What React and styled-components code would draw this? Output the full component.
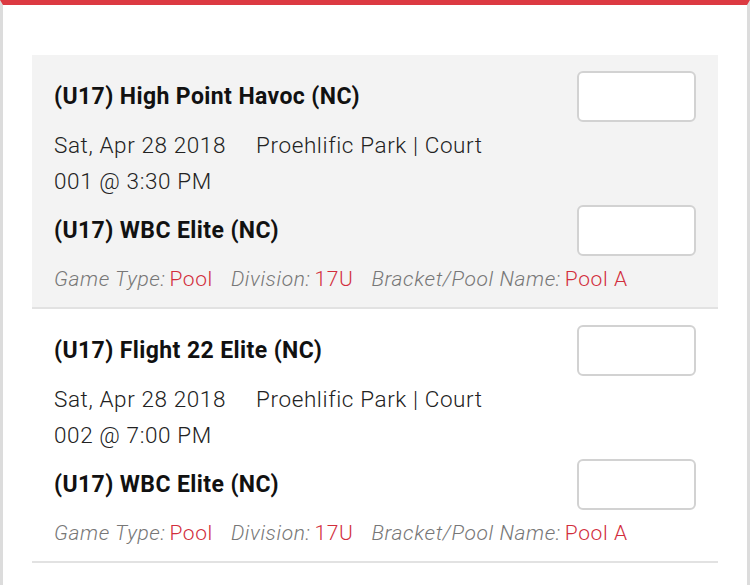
import React from "react";
import styled, { createGlobalStyle } from "styled-components";

const games = [
  {
    id: 1,
    home: "(U17) High Point Havoc (NC)",
    away: "(U17) WBC Elite (NC)",
    date: "Sat, Apr 28 2018",
    place: "Proehlific Park | Court 001 @ 3:30 PM",
    type: "Pool",
    division: "17U",
    pool: "Pool A",
    shaded: true,
  },
  {
    id: 2,
    home: "(U17) Flight 22 Elite (NC)",
    away: "(U17) WBC Elite (NC)",
    date: "Sat, Apr 28 2018",
    place: "Proehlific Park | Court 002 @ 7:00 PM",
    type: "Pool",
    division: "17U",
    pool: "Pool A",
    shaded: false,
  },
];

const App = () => {
  return (
    <>
      <GlobalStyle />
      <Panel>
        {games.map((game) => (
          <Game key={game.id} $shaded={game.shaded}>
            <TeamRow>
              <TeamName>{game.home}</TeamName>
              <ScoreInput type="text" />
            </TeamRow>
            <When>
              <DateText>{game.date}</DateText>
              {game.place}
            </When>
            <TeamRow $gap>
              <TeamName>{game.away}</TeamName>
              <ScoreInput type="text" />
            </TeamRow>
            <Meta>
              <MetaItem>
                <Label>Game Type:</Label>
                <Value>{game.type}</Value>
              </MetaItem>
              <MetaItem>
                <Label>Division:</Label>
                <Value>{game.division}</Value>
              </MetaItem>
              <MetaItem>
                <Label>Bracket/Pool Name:</Label>
                <Value>{game.pool}</Value>
              </MetaItem>
            </Meta>
          </Game>
        ))}
      </Panel>
    </>
  );
};

const GlobalStyle = createGlobalStyle`
  html, body {
    margin: 0;
    padding: 0;
    background: #fff;
    font-family: Roboto, "Noto Sans", sans-serif;
  }
`;

const Panel = styled.div`
  box-sizing: border-box;
  width: 750px;
  min-height: 585px;
  border-top: 5px solid #dc3a42;
  border-left: 3px solid #dcdcdc;
  border-right: 3px solid #dcdcdc;
  padding: 50px 29px 0 29px;
  display: flex;
  flex-direction: column;
`;

const Game = styled.div`
  background: ${(p) => (p.$shaded ? "#f3f3f3" : "#fff")};
  border-bottom: 2px solid #e2e2e2;
  padding: 16px 22px 14px 22px;
`;

const TeamRow = styled.div`
  display: flex;
  align-items: center;
  justify-content: space-between;
  height: 50px;
  margin-top: ${(p) => (p.$gap ? "6px" : "0")};
`;

const TeamName = styled.div`
  font-size: 23px;
  font-weight: 700;
  letter-spacing: 0.4px;
  color: #111;
`;

const ScoreInput = styled.input`
  box-sizing: border-box;
  width: 119px;
  height: 51px;
  border: 2px solid #d2d2d2;
  border-radius: 6px;
  background: #fff;
  outline: none;
`;

const When = styled.div`
  width: 455px;
  margin-top: 6px;
  font-size: 22.5px;
  font-weight: 300;
  letter-spacing: 0.6px;
  line-height: 36px;
  color: #222;
`;

const DateText = styled.span`
  margin-right: 30px;
`;

const Meta = styled.div`
  display: flex;
  gap: 18px;
  margin-top: 10px;
  font-size: 21px;
  font-weight: 300;
  letter-spacing: 0.6px;
  line-height: 28px;
`;

const MetaItem = styled.span`
  display: flex;
  gap: 4px;
`;

const Label = styled.span`
  font-style: italic;
  color: #777;
`;

const Value = styled.span`
  color: #d22e3c;
`;

export default App;
